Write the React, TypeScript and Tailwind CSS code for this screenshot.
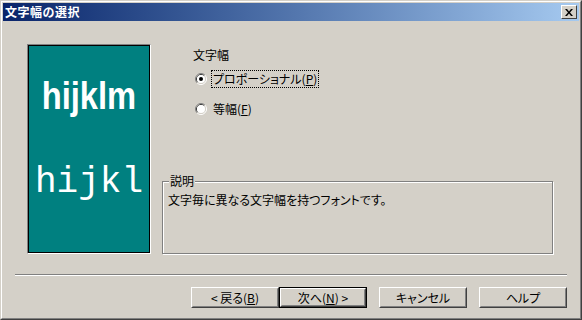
import { FC, PropsWithChildren } from 'react';

const ui = "[font-family:'Noto_Sans_CJK_JP',sans-serif] [font-feature-settings:'palt'] text-[12px] leading-[16px] text-black";

const Radio: FC<{ checked?: boolean }> = ({ checked }) => (
  <svg width="12" height="12" viewBox="0 0 12 12" className="shrink-0">
    <path d="M2.11 9.89 A5.5 5.5 0 0 1 9.89 2.11" fill="none" stroke="#808080" />
    <path d="M9.89 2.11 A5.5 5.5 0 0 1 2.11 9.89" fill="none" stroke="#ffffff" />
    <path d="M2.82 9.18 A4.5 4.5 0 0 1 9.18 2.82" fill="none" stroke="#404040" />
    <path d="M9.18 2.82 A4.5 4.5 0 0 1 2.82 9.18" fill="none" stroke="#d4d0c8" />
    <circle cx="6" cy="6" r="4" fill="#ffffff" />
    {checked && <circle cx="6" cy="6" r="2" fill="#000000" />}
  </svg>
);

const Btn: FC<PropsWithChildren<{ primary?: boolean; className?: string }>> = ({
  children,
  primary,
  className = '',
}) => (
  <div
    className={`w-[88px] h-[21px] ${primary ? 'border border-black' : ''} ${className}`}
  >
    <div className="w-full h-full border border-t-white border-l-white border-r-[#404040] border-b-[#404040]">
      <div className="w-full h-full border border-t-[#d4d0c8] border-l-[#d4d0c8] border-r-[#808080] border-b-[#808080] flex items-center justify-center">
        <span className={ui}>{children}</span>
      </div>
    </div>
  </div>
);

const App: FC = () => {
  return (
    <div className="w-[582px] h-[320px] bg-[#d4d0c8] border border-t-[#d4d0c8] border-l-[#d4d0c8] border-r-[#404040] border-b-[#404040]">
      <div className="w-full h-full border border-t-white border-l-white border-r-[#808080] border-b-[#808080] p-px flex flex-col">
        {/* title bar */}
        <div className="h-[18px] flex items-center justify-between bg-gradient-to-r from-[#0a246a] to-[#a6caf0] pl-[2px] pr-[2px]">
          <span className="[font-family:'Noto_Sans_CJK_JP',sans-serif] text-[12px] leading-[14px] font-bold text-white tracking-[0.5px]">
            文字幅の選択
          </span>
          <div className="w-[16px] h-[14px] bg-[#d4d0c8] border border-t-white border-l-white border-r-[#404040] border-b-[#404040] flex items-center justify-center">
            <svg width="8" height="7" viewBox="0 0 8 7">
              <path d="M0 0h2l2 2.5L6 0h2L5 3.5 8 7H6L4 4.5 2 7H0l3-3.5z" fill="#000" />
            </svg>
          </div>
        </div>

        {/* body */}
        <div className="flex-1 flex flex-col">
          <div className="flex items-start pl-[24px] pt-[23px]">
            <div className="w-[124px] h-[210px] border border-t-[#808080] border-l-[#808080] border-r-white border-b-white">
              <div className="w-full h-full border border-black bg-[#008080] flex flex-col items-center pt-[31px] text-white overflow-hidden">
                <div className="[font-family:'Liberation_Sans',Arial,sans-serif] font-bold text-[38px] leading-[38px] scale-x-[0.86] whitespace-nowrap">
                  hijklm
                </div>
                <div className="[font-family:'Liberation_Mono','Courier_New',monospace] text-[36px] leading-[36px] mt-[50px] whitespace-nowrap">
                  hijkl
                </div>
              </div>
            </div>

            <div className="ml-[11px] flex flex-col">
              <div className={`${ui} mt-[3px] pl-[31px]`}>文字幅</div>
              <div className="mt-[8px] h-[16px] flex items-center pl-[33px]">
                <Radio checked />
                <span className={`${ui} ml-[4px] px-px border border-dotted border-black leading-[14px] whitespace-nowrap`}>
                  プロポーショナル(<span className="underline">P</span>)
                </span>
              </div>
              <div className="mt-[14px] h-[16px] flex items-center pl-[33px]">
                <Radio />
                <span className={`${ui} ml-[5px] px-px whitespace-nowrap`}>
                  等幅(<span className="underline">F</span>)
                </span>
              </div>
              <fieldset className="mt-[56px] w-[391px] h-[81px] border border-[#808080] shadow-[inset_1px_1px_0_#ffffff,1px_1px_0_#ffffff] px-[6px] pb-0 pt-0 m-0 min-w-0">
                <legend className={`${ui} px-px leading-[14px] bg-[#d4d0c8]`}>説明</legend>
                <div className={`${ui} pt-[3px] -ml-[1px]`}>文字毎に異なる文字幅を持つフォントです。</div>
              </fieldset>
            </div>
          </div>

          <div className="mt-[20px] mx-[12px] h-[2px] border-t border-t-[#808080] border-b border-b-white" />

          <div className="mt-[11px] flex justify-end pr-[12px]">
            <Btn>&lt; 戻る(<span className="underline">B</span>)</Btn>
            <Btn primary>次へ(<span className="underline">N</span>) &gt;</Btn>
            <Btn className="ml-[12px]">キャンセル</Btn>
            <Btn className="ml-[12px]">ヘルプ</Btn>
          </div>
        </div>
      </div>
    </div>
  );
};

export default App;
